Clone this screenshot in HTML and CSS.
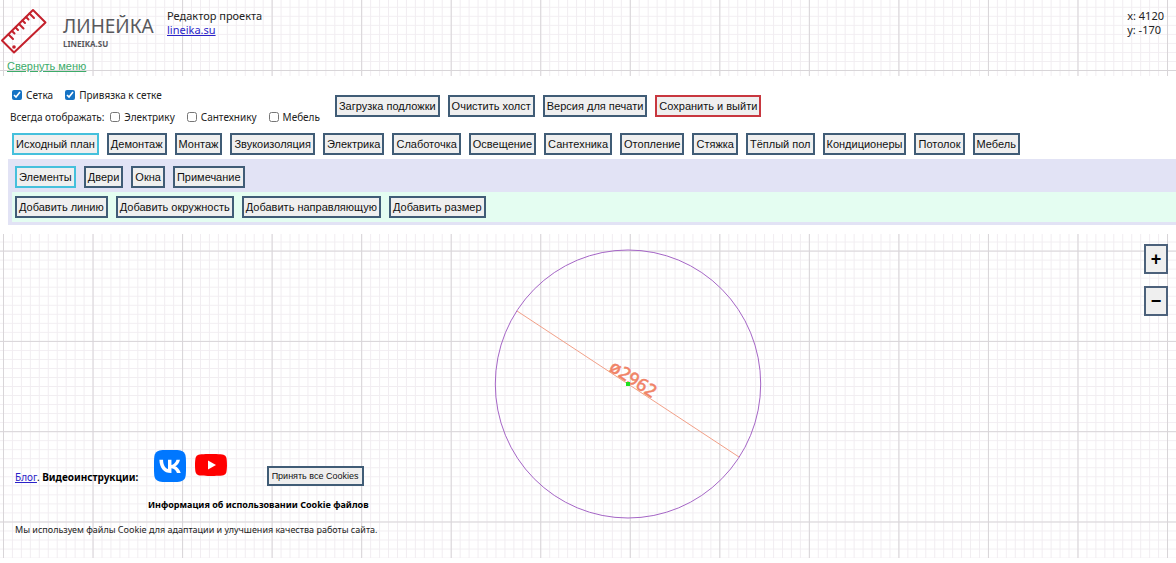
FILE: index.html
```html
<!DOCTYPE html>
<html lang="ru">
<head>
<meta charset="utf-8">
<title>Линейка — редактор проекта</title>
<link rel="stylesheet" href="styles.css">
</head>
<body>
<div class="editor">
  <svg class="canvas" role="img" aria-label="Чертёж">
    <defs>
      <pattern id="minor" width="8.954" height="9.03" x="3" y="70" patternUnits="userSpaceOnUse">
        <path d="M.5 0V9.03M0 .5H8.954" stroke="#f1edf1" fill="none"/>
      </pattern>
      <pattern id="major" width="89.54" height="90.3" x="3" y="70" patternUnits="userSpaceOnUse">
        <path d="M.5 0V90.3M0 .5H89.54" stroke="#d8d5d8" fill="none"/>
      </pattern>
    </defs>
    <rect width="100%" height="100%" fill="url(#minor)"/>
    <rect width="100%" height="100%" fill="url(#major)"/>
    <ellipse cx="628" cy="384" rx="132.7" ry="134" fill="none" stroke="#a566c6"/>
    <path d="M517 311L739 457" stroke="#f2a088"/>
    <text class="dimension" transform="translate(608 370) rotate(33)">ø2962</text>
    <rect x="626" y="382" width="4" height="4" fill="#1fe01f"/>
  </svg>

  <header class="header">
    <div class="brand">
      <svg class="brand-icon" viewBox="0 0 48 48" aria-hidden="true">
        <g fill="none" stroke="#c4212c" stroke-width="2" stroke-linejoin="round" stroke-linecap="round">
          <path d="M33 2L45.500 14.500L14 44.500L2 32.500Z"/>
          <path d="M29.500 5.500L34 10M26 9L28.500 11.500M22.500 12.500L25 15M19 16L23.500 20.500M15.500 19.500L18 22M12 23L14.500 25.500M8.500 26.500L13 31"/>
        </g>
        <circle cx="14" cy="39" r="1.800" fill="#c4212c"/>
      </svg>
      <div class="brand-text">
        <div class="brand-name">ЛИНЕЙКА</div>
        <div class="brand-site">LINEIKA.SU</div>
      </div>
    </div>
    <div class="project">Редактор проекта<br><a href="#">lineika.su</a></div>
    <div class="coords">x: 4120<br>y: -170</div>
    <a class="collapse" href="#">Свернуть меню</a>
  </header>

  <nav class="menu">
    <div class="options">
      <div class="checks">
        <div class="check-row snap">
          <label><input type="checkbox" checked>Сетка</label>
          <label><input type="checkbox" checked>Привязка к сетке</label>
        </div>
        <div class="check-row">
          <span>Всегда отображать:</span>
          <label><input type="checkbox">Электрику</label>
          <label><input type="checkbox">Сантехнику</label>
          <label><input type="checkbox">Мебель</label>
        </div>
      </div>
      <div class="row">
        <button class="btn">Загрузка подложки</button>
        <button class="btn">Очистить холст</button>
        <button class="btn">Версия для печати</button>
        <button class="btn danger">Сохранить и выйти</button>
      </div>
    </div>
    <div class="row plans">
      <button class="btn active">Исходный план</button>
      <button class="btn">Демонтаж</button>
      <button class="btn">Монтаж</button>
      <button class="btn">Звукоизоляция</button>
      <button class="btn">Электрика</button>
      <button class="btn">Слаботочка</button>
      <button class="btn">Освещение</button>
      <button class="btn">Сантехника</button>
      <button class="btn">Отопление</button>
      <button class="btn">Стяжка</button>
      <button class="btn">Тёплый пол</button>
      <button class="btn">Кондиционеры</button>
      <button class="btn">Потолок</button>
      <button class="btn">Мебель</button>
    </div>
    <div class="panel">
      <div class="row groups">
        <button class="btn active">Элементы</button>
        <button class="btn">Двери</button>
        <button class="btn">Окна</button>
        <button class="btn">Примечание</button>
      </div>
      <div class="row tools">
        <button class="btn">Добавить линию</button>
        <button class="btn">Добавить окружность</button>
        <button class="btn">Добавить направляющую</button>
        <button class="btn">Добавить размер</button>
      </div>
    </div>
  </nav>

  <main class="workspace">
    <div class="zoom">
      <button class="zoom-btn" aria-label="Увеличить">+</button>
      <button class="zoom-btn" aria-label="Уменьшить">−</button>
    </div>
    <footer class="footer">
      <div class="footer-row">
        <div class="footer-links"><a href="#">Блог</a>. <b>Видеоинструкции:</b></div>
        <a class="social" href="#" aria-label="ВКонтакте">
          <svg class="social-icon" viewBox="0 0 32 32">
            <path fill="#0077ff" d="M0 15.360C0 8.120 0 4.500 2.250 2.250 4.500 0 8.120 0 15.360 0h1.280c7.240 0 10.860 0 13.110 2.250C32 4.500 32 8.120 32 15.360v1.280c0 7.240 0 10.860-2.250 13.110C27.500 32 23.880 32 16.640 32h-1.280c-7.240 0-10.860 0-13.110-2.250C0 27.500 0 23.880 0 16.640z"/>
            <path fill="#fff" d="M17.030 23.050c-7.290 0-11.450-5-11.630-13.320h3.650c.12 6.110 2.810 8.690 4.950 9.230V9.730h3.440V15c2.110-.23 4.320-2.630 5.070-5.270h3.440c-.57 3.250-2.970 5.650-4.680 6.640 1.710.8 4.440 2.890 5.480 6.680h-3.790c-.81-2.530-2.840-4.490-5.520-4.760v4.760z"/>
          </svg>
        </a>
        <a class="social" href="#" aria-label="YouTube">
          <svg class="social-icon" viewBox="0 0 32 32">
            <path fill="#f00" d="M31.300 7.500a4 4 0 0 0-2.800-2.800C26 4 16 4 16 4S6 4 3.500 4.700A4 4 0 0 0 .7 7.500C0 10 0 15 0 15s0 5 .7 7.500a4 4 0 0 0 2.800 2.800C6 26 16 26 16 26s10 0 12.500-.7a4 4 0 0 0 2.800-2.800C32 20 32 15 32 15s0-5-.7-7.500z"/>
            <path fill="#fff" d="M13 10.500L21 15l-8 4.500z"/>
          </svg>
        </a>
        <button class="btn accept">Принять все Cookies</button>
      </div>
      <b class="cookie-title">Информация об использовании Cookie файлов</b>
      <p class="cookie-text">Мы используем файлы Cookie для адаптации и улучшения качества работы сайта.</p>
    </footer>
  </main>
</div>
</body>
</html>
```
FILE: styles.css
```css
* { box-sizing: border-box; }
body {
  margin: 0;
  background: #fff;
  color: #222;
  font: 11px/14px "Noto Sans", "Open Sans", sans-serif;
}
a { color: #2a22c8; }
.editor {
  position: relative;
  min-height: calc(100vh - 5px);
  display: flex;
  flex-direction: column;
}
.canvas {
  position: absolute;
  inset: 0;
  width: 100%;
  height: 100%;
}
.dimension {
  font: 500 18px "Noto Sans", sans-serif;
  fill: #f08468;
  stroke: #f08468;
  stroke-width: 0.4px;
}
.header, .menu, .workspace { position: relative; }
.header {
  display: grid;
  grid-template-columns: 167px 1fr auto;
  grid-template-rows: 59px 17px;
  padding-right: 12px;
}
.brand { display: flex; padding-top: 8px; gap: 15px; }
.brand-icon { width: 48px; height: 48px; }
.brand-text { padding-top: 5px; color: #58585c; }
.brand-name { font-size: 19px; line-height: 27px; }
.brand-site { font-size: 8px; line-height: 8px; font-weight: 700; }
.project, .coords { padding-top: 9px; }
.collapse {
  color: #3cab69;
  font: 11px/14px "Liberation Sans", Arial, sans-serif;
  padding-left: 7px;
}
.menu {
  background: #fff;
  padding: 8px 0 9px 8px;
}
.options { display: flex; gap: 15px; align-items: center; }
.checks { padding-left: 2px; font-size: 10px; flex: 0 0 309px; white-space: nowrap; }
.check-row { display: flex; gap: 12px; height: 22px; align-items: center; }
.check-row.snap { padding-left: 2px; }
.check-row label { display: flex; align-items: center; gap: 4px; }
.check-row span { margin-right: -6px; }
.check-row input { width: 10px; height: 10px; margin: 0; accent-color: #1673c4; }
.row { display: flex; flex-wrap: wrap; gap: 8px; }
.btn {
  height: 22px;
  padding: 0 2px;
  border: 2px solid #405c76;
  background: #efefef;
  color: #111;
  font: 11px/14px "Liberation Sans", Arial, sans-serif;
  white-space: nowrap;
}
.btn.active { border-color: #45c0dc; }
.btn.danger { border-color: #c8373f; }
.plans { padding: 5px 4px 4px; }
.panel { background: #e2e3f5; padding: 7px 0 3px 4px; }
.groups { padding: 0 3px 4px; }
.tools { background: #e4fdf1; padding: 4px 3px; }
.workspace {
  flex: 1;
  display: flex;
  flex-direction: column;
  justify-content: space-between;
  padding: 10px 8px 21px 15px;
}
.zoom { display: flex; flex-direction: column; gap: 12px; align-self: flex-end; }
.zoom-btn {
  width: 24px;
  height: 30px;
  padding: 0;
  border: 2px solid #4c617b;
  background: #efefef;
  color: #000;
  font: 700 18px/20px "Liberation Sans", Arial, sans-serif;
}
.footer { display: flex; flex-direction: column; width: fit-content; }
.footer-row { display: flex; align-items: flex-end; padding-right: 14px; color: #000; }
.footer-links { margin: 0 16px 2px 0; font-size: 10px; }
.social { display: block; height: 36px; margin-right: 9px; }
.social-icon { display: block; width: 32px; height: 32px; }
.accept { height: 20px; margin-left: auto; padding: 0 3px; font-size: 9px; }
.cookie-title { align-self: flex-end; margin: 12px 9px 0 0; color: #000; font-size: 9px; }
.cookie-text { margin: 11px 0 0; font-size: 9px; }
```
